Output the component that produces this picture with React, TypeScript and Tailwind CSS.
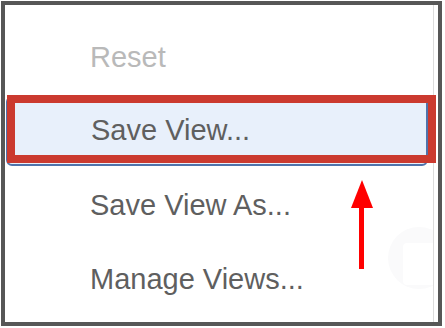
import React from 'react';

const items = [
  { label: 'Reset', disabled: true },
  { label: 'Save View...', selected: true },
  { label: 'Save View As...' },
  { label: 'Manage Views...' },
];

export default function App() {
  return (
    <div className="w-[445px] h-[328px] bg-white p-px" style={{ fontFamily: '"Liberation Sans", Arial, sans-serif' }}>
      <div className="relative w-[441px] h-[325px] border-[4px] border-[#575757] bg-white">
        {/* menu panel */}
        <div className="relative w-[429px] h-full border-r border-[#dcdcdc] overflow-hidden pt-[16px]">
          {/* faint floating button behind the menu */}
          <div className="absolute left-[383px] top-[222px] w-[62px] h-[62px] rounded-full bg-[#fafafb]">
            <div className="absolute left-[15px] top-[16px] w-[40px] h-[42px] rounded-sm bg-white" />
          </div>
          <ul className="relative flex flex-col">
            {items.map((item) => (
              <li key={item.label} className="h-[74px] flex flex-col">
                {item.selected ? (
                  <div className="mt-px ml-px h-[70px] w-[422px] flex items-center pl-[83px] rounded-md border-2 border-[#5073ab] bg-[#e8f0fb] text-[29px] text-[#5f5f5f]">
                    {item.label}
                  </div>
                ) : (
                  <div
                    className={`h-full flex items-center pl-[85px] text-[29px] ${
                      item.disabled ? 'text-[#b9b9b9]' : 'text-[#5f5f5f]'
                    }`}
                  >
                    {item.label}
                  </div>
                )}
              </li>
            ))}
          </ul>
        </div>

        {/* annotation: red highlight box */}
        <div className="absolute left-[2px] top-[90px] w-[429px] h-[68px] border-[8px] border-[#cb3a2f]" />

        {/* annotation: red arrow */}
        <svg className="absolute left-[346px] top-[175px]" width="22" height="89" viewBox="0 0 22 89">
          <polygon points="11,0 0,28 22,28" fill="#ff0000" />
          <rect x="8" y="26" width="5" height="63" fill="#ff0000" />
        </svg>
      </div>
    </div>
  );
}
